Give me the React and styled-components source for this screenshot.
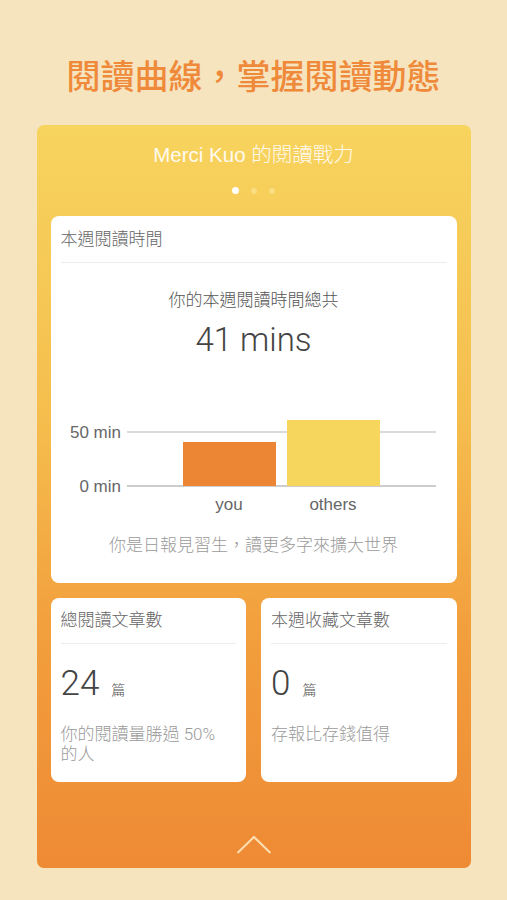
import React from 'react';
import styled, { createGlobalStyle } from 'styled-components';

const GlobalStyle = createGlobalStyle`
  body {
    margin: 0;
    background-color: #f6e4bf;
    font-family: "Liberation Sans", "Noto Sans CJK TC", sans-serif;
  }
`;

const App = () => {
  return (
    <Page>
      <GlobalStyle />
      <Heading>閱讀曲線，掌握閱讀動態</Heading>

      <Panel>
        <PanelTitle>Merci Kuo 的閱讀戰力</PanelTitle>
        <Dots>
          <Dot $active />
          <Dot />
          <Dot />
        </Dots>

        {/* weekly reading time */}
        <Card>
          <CardHeader>本週閱讀時間</CardHeader>
          <Lead>你的本週閱讀時間總共</Lead>
          <BigValue>41 mins</BigValue>
          <Chart />
          <Note>你是日報見習生，讀更多字來擴大世界</Note>
        </Card>

        <StatRow>
          <StatCard
            title="總閱讀文章數"
            value="24"
            text="你的閱讀量勝過 50% 的人"
          />
          <StatCard title="本週收藏文章數" value="0" text="存報比存錢值得" />
        </StatRow>

        <Chevron width="36" height="20" viewBox="0 0 36 20">
          <polyline
            points="1.5,18 18,2 34.5,18"
            fill="none"
            stroke="rgba(255, 236, 200, 0.85)"
            strokeWidth="2"
          />
        </Chevron>
      </Panel>
    </Page>
  );
};

const Chart = () => (
  <ChartSvg width="386" height="115" viewBox="0 0 386 115">
    <line x1="66" y1="31" x2="375" y2="31" stroke="#cfcfcf" strokeWidth="1.5" />
    <line x1="66" y1="85" x2="375" y2="85" stroke="#bdbdbd" strokeWidth="1.5" />
    <rect x="122" y="41" width="93" height="44" fill="#ec8634" />
    <rect x="226" y="19" width="93" height="66" fill="#f7d65e" />
    <text x="60" y="37" textAnchor="end">50 min</text>
    <text x="60" y="91" textAnchor="end">0 min</text>
    <text x="168" y="109" textAnchor="middle">you</text>
    <text x="272" y="109" textAnchor="middle">others</text>
  </ChartSvg>
);

const StatCard = ({ title, value, text }) => (
  <SmallCard>
    <CardHeader>{title}</CardHeader>
    <Count>
      <CountNum>{value}</CountNum>
      <CountUnit>篇</CountUnit>
    </Count>
    <Desc>{text}</Desc>
  </SmallCard>
);

const Page = styled.div`
  width: 507px;
  height: 900px;
  display: flex;
  flex-direction: column;
  align-items: center;
  overflow: hidden;
`;

const Heading = styled.h1`
  margin: 55px 0 0;
  font-family: "Noto Sans CJK TC", sans-serif;
  font-size: 34px;
  line-height: 40px;
  font-weight: 500;
  color: #ef8a3b;
`;

const Panel = styled.div`
  margin-top: 30px;
  width: 434px;
  height: 743px;
  box-sizing: border-box;
  padding: 18px 14px 0;
  border-radius: 7px;
  background: linear-gradient(180deg, #f7d45e 0%, #f5bd4d 40%, #f29f3d 68%, #ee8a34 100%);
  display: flex;
  flex-direction: column;
  align-items: center;
`;

const PanelTitle = styled.div`
  font-size: 20.5px;
  line-height: 24px;
  color: #fffaf0;
  font-weight: 300;
`;

const Dots = styled.div`
  display: flex;
  gap: 12px;
  align-items: center;
  margin-top: 20px;
  height: 7px;
`;

const Dot = styled.span`
  width: ${(p) => (p.$active ? '7px' : '6px')};
  height: ${(p) => (p.$active ? '7px' : '6px')};
  border-radius: 50%;
  background: ${(p) => (p.$active ? '#ffffff' : '#f9df82')};
`;

const Card = styled.div`
  margin-top: 22px;
  width: 406px;
  box-sizing: border-box;
  padding: 13px 10px 26px;
  background: #ffffff;
  border-radius: 8px;
  display: flex;
  flex-direction: column;
  align-items: center;
`;

const CardHeader = styled.div`
  align-self: stretch;
  font-size: 17px;
  line-height: 22px;
  font-weight: 300;
  color: #666666;
  padding-bottom: 11px;
  border-bottom: 1px solid #ececec;
`;

const Lead = styled.div`
  margin-top: 27px;
  font-size: 17px;
  line-height: 22px;
  font-weight: 300;
  color: #555555;
`;

const BigValue = styled.div`
  margin-top: 9px;
  font-family: Roboto, "Liberation Sans", sans-serif;
  font-weight: 300;
  font-size: 33px;
  line-height: 38px;
  color: #444444;
`;

const ChartSvg = styled.svg`
  display: block;
  margin-top: 42px;
  font-family: "Liberation Sans", sans-serif;
  font-size: 17px;
  fill: #666666;
`;

const Note = styled.div`
  margin-top: 19px;
  font-size: 17px;
  line-height: 22px;
  font-weight: 300;
  color: #9a9a9a;
`;

const StatRow = styled.div`
  margin-top: 15px;
  width: 406px;
  display: grid;
  grid-template-columns: 1fr 1fr;
  gap: 15px;
`;

const SmallCard = styled.div`
  height: 184px;
  box-sizing: border-box;
  padding: 12px 10px 0;
  background: #ffffff;
  border-radius: 8px;
  display: flex;
  flex-direction: column;
`;

const Count = styled.div`
  margin-top: 20px;
  display: flex;
  align-items: baseline;
  gap: 12px;
`;

const CountNum = styled.span`
  font-family: Roboto, "Liberation Sans", sans-serif;
  font-weight: 300;
  font-size: 35px;
  line-height: 40px;
  color: #444444;
`;

const CountUnit = styled.span`
  font-family: "Noto Sans CJK TC", sans-serif;
  font-size: 14px;
  font-weight: 300;
  color: #555555;
`;

const Desc = styled.div`
  margin-top: 20px;
  font-family: Roboto, "Noto Sans CJK TC", sans-serif;
  font-size: 17px;
  line-height: 20px;
  font-weight: 300;
  color: #9a9a9a;
`;

const Chevron = styled.svg`
  display: block;
  margin-top: 53px;
`;

export default App;
